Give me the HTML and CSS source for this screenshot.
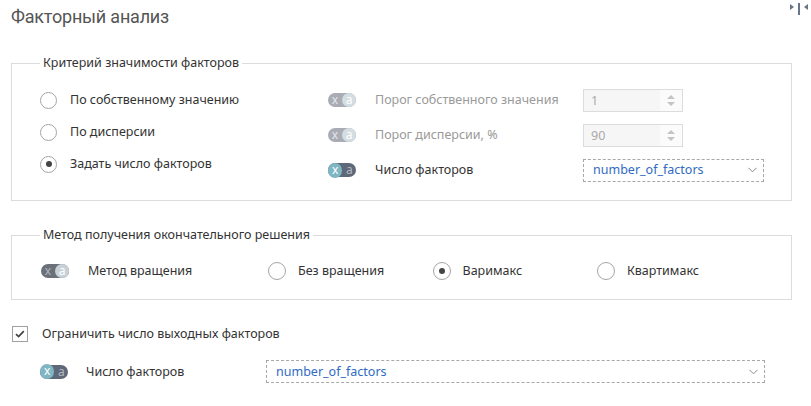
FILE: index.html
```html
<!DOCTYPE html>
<html lang="ru">
<head>
<meta charset="utf-8">
<title>Факторный анализ</title>
<link rel="stylesheet" href="styles.css">
</head>
<body>
<header class="header">
  <h1 class="title">Факторный анализ</h1>
  <svg class="split-icon" width="20" height="16" viewBox="0 0 20 16">
    <polygon points="1,4 5,7 1,10" fill="#67748a"/>
    <rect x="9" y="3" width="2" height="12" fill="#67748a"/>
    <polygon points="19,4 15,7 19,10" fill="#67748a"/>
  </svg>
</header>
<main class="page">
  <fieldset class="group group-criteria">
    <legend class="legend">Критерий значимости факторов</legend>
    <div class="criteria-body">
      <div class="radio-col">
        <label class="radio-row"><span class="radio"></span><span class="label">По собственному значению</span></label>
        <label class="radio-row"><span class="radio"></span><span class="label">По дисперсии</span></label>
        <label class="radio-row"><span class="radio checked"></span><span class="label">Задать число факторов</span></label>
      </div>
      <div class="param-col">
        <div class="param-row">
          <span class="tg tg-dis"><span class="tg-t">x</span><span class="tg-k">a</span></span>
          <span class="param-label disabled">Порог собственного значения</span>
          <span class="num-input"><span class="num-value">1</span><span class="spin"><span class="spin-up"></span><span class="spin-down"></span></span></span>
        </div>
        <div class="param-row">
          <span class="tg tg-dis"><span class="tg-t">x</span><span class="tg-k">a</span></span>
          <span class="param-label disabled">Порог дисперсии, %</span>
          <span class="num-input"><span class="num-value">90</span><span class="spin"><span class="spin-up"></span><span class="spin-down"></span></span></span>
        </div>
        <div class="param-row">
          <span class="tg tg-on"><span class="tg-k">x</span><span class="tg-t">a</span></span>
          <span class="param-label">Число факторов</span>
          <span class="select select-short"><span class="select-value">number_of_factors</span>
            <svg class="chev" width="9" height="6" viewBox="0 0 9 6"><polyline points="0.5,0.8 4.5,4.8 8.5,0.8" fill="none" stroke="#8a8a8a" stroke-width="1"/></svg>
          </span>
        </div>
      </div>
    </div>
  </fieldset>

  <fieldset class="group group-method">
    <legend class="legend">Метод получения окончательного решения</legend>
    <div class="method-row">
      <span class="tg tg-off"><span class="tg-t">x</span><span class="tg-k">a</span></span>
      <span class="method-label">Метод вращения</span>
      <label class="opt"><span class="radio"></span><span class="label">Без вращения</span></label>
      <label class="opt"><span class="radio checked"></span><span class="label">Варимакс</span></label>
      <label class="opt"><span class="radio"></span><span class="label">Квартимакс</span></label>
    </div>
  </fieldset>

  <label class="check-row"><span class="checkbox">
    <svg width="10" height="8" viewBox="0 0 10 8"><polyline points="1,4.2 3.6,6.6 8.8,1.2" fill="none" stroke="#444" stroke-width="1.8"/></svg>
  </span><span class="label">Ограничить число выходных факторов</span></label>

  <div class="out-row">
    <span class="tg tg-on"><span class="tg-k">x</span><span class="tg-t">a</span></span>
    <span class="out-label">Число факторов</span>
    <span class="select select-long"><span class="select-value">number_of_factors</span>
      <svg class="chev" width="9" height="6" viewBox="0 0 9 6"><polyline points="0.5,0.8 4.5,4.8 8.5,0.8" fill="none" stroke="#8a8a8a" stroke-width="1"/></svg>
    </span>
  </div>
</main>
</body>
</html>
```

FILE: styles.css
```css
* { box-sizing: border-box; }
html, body { margin: 0; padding: 0; background: #fff; }
body {
  font-family: "Noto Sans", "Open Sans", sans-serif;
  font-size: 12.5px;
  color: #333;
  width: 811px;
  height: 406px;
  overflow: hidden;
}
.header {
  display: flex;
  justify-content: space-between;
  align-items: flex-start;
  padding: 0 2px 0 11px;
  height: 30px;
}
.title {
  margin: 0;
  padding-top: 4px;
  font-family: Roboto, "Noto Sans", sans-serif;
  font-size: 18px;
  letter-spacing: -0.2px;
  line-height: 26px;
  font-weight: 400;
  color: #555;
}
.split-icon { display: block; margin-top: 0; }

.page { padding: 0 19px 0 11px; }

.group {
  margin: 0;
  padding: 0;
  border: 1px solid #dcdcdc;
  min-width: 0;
}
.legend {
  margin-left: 28px;
  padding: 0 3px;
  line-height: 18px;
  color: #333;
}
.group-criteria { margin-top: 24px; }
.criteria-body {
  display: flex;
  padding: 17px 0 19px 28px;
}
.radio-col {
  width: 288px;
  display: flex;
  flex-direction: column;
  gap: 10px;
}
.radio-row {
  display: flex;
  align-items: center;
  height: 22px;
}
.radio {
  width: 17px;
  height: 17px;
  border: 1px solid #a5a5a5;
  border-radius: 50%;
  background: #fff;
  display: flex;
  align-items: center;
  justify-content: center;
  flex: none;
}
.radio.checked::after {
  content: "";
  width: 6px;
  height: 6px;
  border-radius: 50%;
  background: #444;
}
.radio-row .radio { margin-right: 13px; }
.label { line-height: 18px; }

.param-col {
  display: flex;
  flex-direction: column;
  gap: 13px;
}
.param-row {
  display: flex;
  align-items: center;
  height: 22px;
}
.param-row .tg { margin-right: 19px; }
.param-label { width: 208px; line-height: 18px; }
.param-label.disabled { color: #9a9a9a; }

.tg {
  display: inline-flex;
  align-items: center;
  width: 28px;
  height: 14px;
  border-radius: 7px;
  flex: none;
  font-size: 12px;
}
.tg-t, .tg-k {
  width: 14px;
  height: 14px;
  line-height: 13px;
  text-align: center;
}
.tg-k { border-radius: 50%; }
.tg-dis { background: #a9acb5; }
.tg-dis .tg-t { color: #e4e6ea; }
.tg-dis .tg-k { background: #d3dde2; color: #fff; }
.tg-on { background: #5e6879; }
.tg-on .tg-k { background: #80b6c3; color: #fff; width: 15px; height: 15px; line-height: 14px; }
.tg-on .tg-t { color: #b3b8c2; }
.tg-off { background: #6c7079; }
.tg-off .tg-t { color: #b4b7bc; }
.tg-off .tg-k { background: #c8d1d7; color: #fff; }

.num-input {
  display: flex;
  width: 100px;
  height: 23px;
  border: 1px solid #dcdcdc;
  background: #f6f6f6;
}
.num-value {
  flex: 1;
  padding-left: 7px;
  line-height: 21px;
  color: #aaa;
}
.spin {
  width: 22px;
  background: #fbfbfb;
  display: flex;
  flex-direction: column;
  align-items: center;
  justify-content: center;
  gap: 3px;
}
.spin-up, .spin-down {
  width: 0;
  height: 0;
  border-left: 4px solid transparent;
  border-right: 4px solid transparent;
}
.spin-up { border-bottom: 4px solid #c4c4c4; }
.spin-down { border-top: 4px solid #c4c4c4; }

.select {
  display: flex;
  align-items: center;
  justify-content: space-between;
  height: 23px;
  border: 1px dashed #a8a8a8;
  padding: 0 6px 0 9px;
  color: #2f6bc2;
}
.select-short { width: 181px; }
.select-long { width: 499px; }
.select-value { line-height: 20px; }
.chev { display: block; }

.group-method { margin-top: 25px; }
.method-row {
  display: flex;
  align-items: center;
  height: 22px;
  margin: 16px 0 17px 29px;
}
.method-row .tg { margin-right: 19px; }
.method-label { width: 180px; line-height: 18px; }
.opt {
  width: 164.5px;
  display: flex;
  align-items: center;
}
.opt .radio { width: 18px; height: 18px; margin-right: 12px; }

.check-row {
  display: flex;
  align-items: center;
  margin: 26px 0 0 1px;
  height: 16px;
}
.checkbox {
  width: 16px;
  height: 16px;
  border: 1px solid #a0a0a0;
  margin-right: 14px;
  display: flex;
  align-items: center;
  justify-content: center;
  flex: none;
}
.checkbox svg { display: block; }

.out-row {
  display: flex;
  align-items: center;
  margin: 18px 0 0 29px;
  height: 23px;
}
.out-row .tg { margin-right: 18px; }
.out-label { width: 180px; line-height: 18px; }
```
